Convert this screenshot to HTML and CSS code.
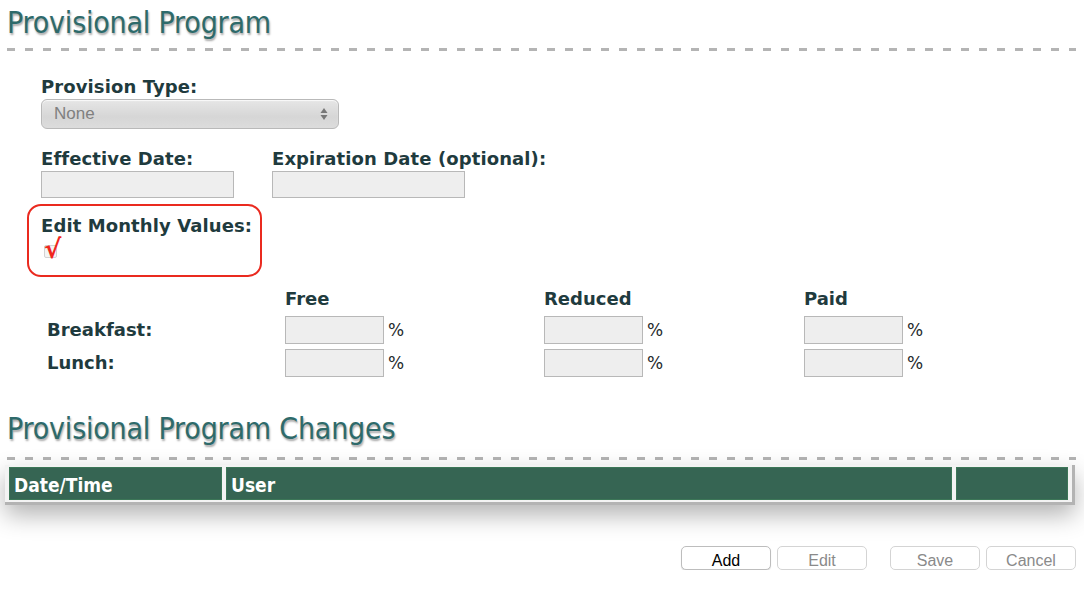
FILE: index.html
```html
<!DOCTYPE html>
<html>
<head>
<meta charset="utf-8">
<link rel="stylesheet" href="styles.css">
</head>
<body>
<div class="page">
  <h1 class="section-title">Provisional Program</h1>
  <div class="dash"></div>

  <div class="form">
    <div class="field">
      <div class="label">Provision Type:</div>
      <div class="select">
        <span class="select-value">None</span>
        <svg class="select-arrows" width="8" height="14" viewBox="0 0 8 14"><path d="M4 1 L7.5 6 H0.5 Z" fill="#777"/><path d="M4 13 L7.5 8 H0.5 Z" fill="#777"/></svg>
      </div>
    </div>

    <div class="date-row">
      <div class="field">
        <div class="label">Effective Date:</div>
        <div class="text-input date-input"></div>
      </div>
      <div class="field">
        <div class="label">Expiration Date (optional):</div>
        <div class="text-input date-input"></div>
      </div>
    </div>

    <div class="monthly-box">
      <div class="label">Edit Monthly Values:</div>
      <span class="checkbox"><span class="check">√</span></span>
    </div>

    <div class="grid">
      <div></div>
      <div class="col-head">Free</div>
      <div class="col-head">Reduced</div>
      <div class="col-head">Paid</div>

      <div class="row-label">Breakfast:</div>
      <div class="pct"><span class="text-input pct-input"></span><span class="pct-sign">%</span></div>
      <div class="pct"><span class="text-input pct-input"></span><span class="pct-sign">%</span></div>
      <div class="pct"><span class="text-input pct-input"></span><span class="pct-sign">%</span></div>

      <div class="row-label">Lunch:</div>
      <div class="pct"><span class="text-input pct-input"></span><span class="pct-sign">%</span></div>
      <div class="pct"><span class="text-input pct-input"></span><span class="pct-sign">%</span></div>
      <div class="pct"><span class="text-input pct-input"></span><span class="pct-sign">%</span></div>
    </div>
  </div>

  <h2 class="section-title changes-title">Provisional Program Changes</h2>
  <div class="dash dash-changes"></div>

  <table class="changes">
    <thead>
      <tr>
        <th class="c-date">Date/Time</th>
        <th class="c-user">User</th>
        <th class="c-extra"></th>
      </tr>
    </thead>
  </table>

  <div class="buttons">
    <div class="btn-group">
      <button class="btn btn-primary">Add</button>
      <button class="btn">Edit</button>
    </div>
    <div class="btn-group">
      <button class="btn">Save</button>
      <button class="btn">Cancel</button>
    </div>
  </div>
</div>
</body>
</html>
```

FILE: styles.css
```css
* { box-sizing: border-box; }

body {
  margin: 0;
  background: #ffffff;
  font-family: "DejaVu Sans", sans-serif;
  color: #1f3b3e;
}

.page {
  padding: 5px 8px 0 7px;
}

.section-title {
  margin: 0;
  font-family: "DejaVu Sans Condensed", "DejaVu Sans", sans-serif;
  font-weight: normal;
  font-size: 30px;
  line-height: 36px;
  color: #2e6a6a;
  text-shadow: 1px 2px 2px rgba(0, 0, 0, 0.35);
  letter-spacing: -0.2px;
}

.dash {
  height: 3px;
  margin-top: 7px;
  background: repeating-linear-gradient(to right, #b4b4b4 0 8px, transparent 8px 18px);
}

.dash-changes {
  margin-top: 10px;
}

.form {
  padding-left: 34px;
  padding-top: 26px;
}

.label {
  font-family: "DejaVu Sans", sans-serif;
  font-weight: bold;
  font-size: 18px;
  line-height: 20px;
  color: #1f3b3e;
  letter-spacing: 0.1px;
}

.select {
  width: 298px;
  height: 30px;
  margin-top: 2px;
  border: 1px solid #b9b9b9;
  border-radius: 6px;
  background: linear-gradient(#e6e6e6, #d6d6d6 60%, #dcdcdc);
  box-shadow: inset 0 1px 1px rgba(255,255,255,0.8);
  display: flex;
  align-items: center;
  justify-content: space-between;
  padding: 0 10px 0 12px;
}

.select-value {
  font-family: "Liberation Sans", Arial, sans-serif;
  font-size: 17px;
  color: #808080;
}

.date-row {
  display: flex;
  gap: 38px;
  margin-top: 20px;
}

.text-input {
  display: block;
  background: #eeeeee;
  border: 1px solid #b8b8b8;
}

.date-input {
  width: 193px;
  height: 27px;
  margin-top: 2px;
}

.monthly-box {
  margin: 6px 0 0 -14px;
  width: 235px;
  height: 73px;
  border: 2px solid #ea2a1f;
  border-radius: 14px;
  padding: 10px 0 0 12px;
}

.checkbox {
  display: block;
  position: relative;
  margin: 9px 0 0 3px;
  width: 13px;
  height: 13px;
  border: 1px solid #d2d2d2;
  border-radius: 2px;
  background: #f4f4f4;
}

.check {
  position: absolute;
  left: -1px;
  top: -8px;
  font-family: "DejaVu Sans", sans-serif;
  font-weight: bold;
  font-size: 26px;
  line-height: 22px;
  color: #f0261c;
}

.grid {
  display: grid;
  grid-template-columns: 238px 259px 260px 1fr;
  row-gap: 5px;
  margin: 10px 0 0 6px;
  align-items: center;
}

.col-head {
  font-weight: bold;
  font-size: 18px;
  line-height: 24px;
  color: #1f3b3e;
}

.row-label {
  font-weight: bold;
  font-size: 18px;
  line-height: 20px;
}

.pct {
  display: flex;
  align-items: center;
  gap: 4px;
}

.pct-input {
  width: 99px;
  height: 28px;
}

.pct-sign {
  font-size: 17px;
  color: #1f2a2c;
}

.changes-title {
  margin-top: 34px;
}

.changes {
  margin: 5px 0 0 -2px;
  width: 1070px;
  border-collapse: separate;
  border-spacing: 4px 2px;
  background: #f3f3f3;
  border-right: 3px solid #b3b3b3;
  border-bottom: 3px solid #b3b3b3;
  box-shadow: 0 10px 24px rgba(0, 0, 0, 0.3);
}

.changes th {
  background: #366553;
  border: 1px solid #3c7657;
  color: #ffffff;
  font-family: "DejaVu Sans Condensed", "DejaVu Sans", sans-serif;
  font-weight: bold;
  font-size: 19px;
  text-align: left;
  height: 33px;
  padding: 2px 0 0 4px;
}

.c-date { width: 213px; }
.c-extra { width: 112px; }

.buttons {
  display: flex;
  justify-content: flex-end;
  gap: 23px;
  margin-top: 41px;
}

.btn-group {
  display: flex;
  gap: 6px;
}

.btn {
  width: 90px;
  height: 24px;
  padding: 0;
  border: 1px solid #d4d4d4;
  border-radius: 5px;
  background: #ffffff;
  font-family: "Liberation Sans", Arial, sans-serif;
  font-size: 16px;
  line-height: 22px;
  padding-top: 3px;
  color: #8a8a8a;
}

.btn-primary {
  color: #000000;
  border-color: #bdbdbd;
  box-shadow: 0 1px 1px rgba(0,0,0,0.15);
}
```
